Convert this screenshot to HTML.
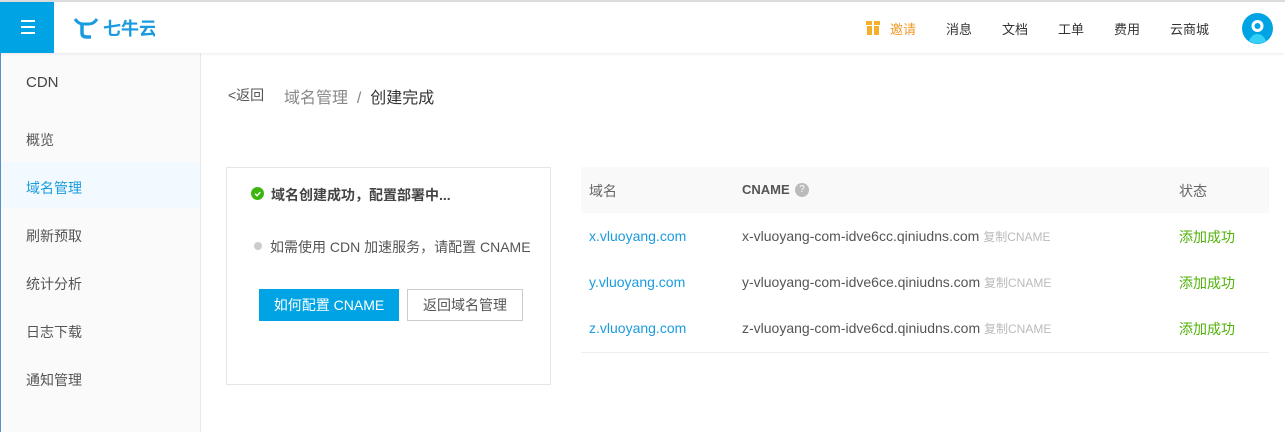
<!DOCTYPE html>
<html><head><meta charset="utf-8"><style>
*{margin:0;padding:0;box-sizing:border-box}
body{width:1285px;height:432px;overflow:hidden;background:#fff;font-family:"Liberation Sans","Noto Sans CJK SC",sans-serif;color:#333;position:relative;font-size:13px}
.abs{position:absolute;white-space:nowrap}
#top{position:absolute;left:0;top:0;width:1285px;height:2px;background:#ddd}
#hdr{position:absolute;left:0;top:2px;width:1285px;height:51px;background:#fff;box-shadow:0 1px 3px rgba(0,0,0,.08);z-index:2}
#menu{position:absolute;left:0;top:2px;width:54px;height:51px;background:#00a4e4;z-index:3}
#menu i{position:absolute;left:21px;width:14px;height:2px;background:#fff}
#side{position:absolute;left:0;top:53px;width:201px;height:379px;background:#fafafa;border-right:1px solid #e8e8e8;border-left:1px solid #5b8fc7}
.nav{color:#555;font-size:14px}
.th{color:#666;font-size:13px}
.a{color:#1a9bdf;font-size:14px}
.c{color:#555;font-size:14px}
.c small{color:#bbb;font-size:12px}
.g{color:#52b20a;font-size:14px}
</style></head><body>
<div id="top"></div>
<div id="hdr">
<svg class="abs" style="left:73px;top:14px" width="82" height="24" viewBox="0 0 82 24"><path d="M2 3c2 3 5 5 8 5h6c3 0 6-2 8-5" stroke="#1a9bdf" stroke-width="3" fill="none"/><path d="M9 8v9c0 3 2 4 5 4h4" stroke="#1a9bdf" stroke-width="3.5" fill="none"/><text x="30" y="19" font-size="18" fill="#1a9bdf" font-family="Noto Sans CJK SC" font-weight="bold">七牛云</text></svg>
<svg class="abs" style="left:866px;top:19px" width="14" height="14"><rect x="0" y="0" width="14" height="4" fill="#f5b02a"/><rect x="1" y="5" width="12" height="9" fill="#f5b02a"/><rect x="6" y="0" width="2" height="14" fill="#fff"/></svg>
<div class="abs" style="left:890px;top:17px;color:#f39a2b;font-size:13px">邀请</div>
<div class="abs" style="left:946px;top:17px;font-size:13px">消息</div>
<div class="abs" style="left:1002px;top:17px;font-size:13px">文档</div>
<div class="abs" style="left:1058px;top:17px;font-size:13px">工单</div>
<div class="abs" style="left:1114px;top:17px;font-size:13px">费用</div>
<div class="abs" style="left:1170px;top:17px;font-size:13px">云商城</div>
<svg class="abs" style="left:1242px;top:11px" width="31" height="31" viewBox="0 0 31 31"><circle cx="15.5" cy="15.5" r="15.5" fill="#00a4e4"/><path d="M7 28c2-5 5-7 8.5-7s6.5 2 8.5 7a15.5 15.5 0 0 1-17 0z" fill="#34d0f5"/><circle cx="15.5" cy="13" r="6" fill="#fff"/><circle cx="15.5" cy="13" r="3" fill="#00a4e4"/></svg>
</div>
<div id="menu"><i style="top:18px"></i><i style="top:24px"></i><i style="top:30px"></i></div>
<div id="side">
<div class="abs" style="left:25px;top:21px;font-size:15px;color:#444">CDN</div>
<div class="abs nav" style="left:25px;top:77px">概览</div>
<div class="abs" style="left:0;top:109px;width:199px;height:46px;background:#f3faff"></div>
<div class="abs nav" style="left:25px;top:125px;color:#1a9bdf">域名管理</div>
<div class="abs nav" style="left:25px;top:173px">刷新预取</div>
<div class="abs nav" style="left:25px;top:221px">统计分析</div>
<div class="abs nav" style="left:25px;top:269px">日志下载</div>
<div class="abs nav" style="left:25px;top:317px">通知管理</div>
</div>
<div class="abs" style="left:228px;top:85px;font-size:14px;color:#555">&lt;返回</div>
<div class="abs" style="left:284px;top:84px;font-size:16px;color:#888">域名管理 &nbsp;/&nbsp; <span style="color:#333">创建完成</span></div>
<div class="abs" style="left:226px;top:167px;width:325px;height:218px;border:1px solid #e5e5e5"></div>
<svg class="abs" style="left:251px;top:187px" width="13" height="13"><circle cx="6.5" cy="6.5" r="6.5" fill="#3cb60f"/><path d="M4 6.7l2 2 3.3-3.5" stroke="#fff" stroke-width="1.4" fill="none"/></svg>
<div class="abs" style="left:271px;top:185px;font-size:14px;font-weight:bold;color:#444">域名创建成功，配置部署中...</div>
<div class="abs" style="left:254px;top:242px;width:8px;height:8px;border-radius:50%;background:#ccc"></div>
<div class="abs" style="left:270px;top:237px;font-size:14px;color:#555">如需使用 CDN 加速服务，请配置 CNAME</div>
<div class="abs" style="left:259px;top:289px;width:140px;height:32px;background:#00a4e4;color:#fff;font-size:14px;text-align:center;line-height:32px">如何配置 CNAME</div>
<div class="abs" style="left:407px;top:289px;width:116px;height:32px;border:1px solid #ccc;color:#555;font-size:14px;text-align:center;line-height:30px">返回域名管理</div>
<div class="abs" style="left:581px;top:167px;width:688px;height:46px;background:#f9f9f9"></div>
<div class="abs th" style="left:589px;top:181px;font-size:14px">域名</div>
<div class="abs th" style="left:742px;top:182px;font-weight:bold;color:#555">CNAME</div>
<div class="abs" style="left:795px;top:183px;width:14px;height:14px;border-radius:50%;background:#bbb;color:#fff;font-size:10px;text-align:center;line-height:14px">?</div>
<div class="abs th" style="left:1179px;top:181px;font-size:14px">状态</div>
<div class="abs a" style="left:589px;top:228px">x.vluoyang.com</div>
<div class="abs c" style="left:742px;top:228px">x-vluoyang-com-idve6cc.qiniudns.com <small>复制CNAME</small></div>
<div class="abs g" style="left:1179px;top:227px">添加成功</div>
<div class="abs a" style="left:589px;top:274px">y.vluoyang.com</div>
<div class="abs c" style="left:742px;top:274px">y-vluoyang-com-idve6ce.qiniudns.com <small>复制CNAME</small></div>
<div class="abs g" style="left:1179px;top:273px">添加成功</div>
<div class="abs a" style="left:589px;top:320px">z.vluoyang.com</div>
<div class="abs c" style="left:742px;top:320px">z-vluoyang-com-idve6cd.qiniudns.com <small>复制CNAME</small></div>
<div class="abs g" style="left:1179px;top:319px">添加成功</div>
<div class="abs" style="left:581px;top:352px;width:688px;height:1px;background:#eee"></div>
</body></html>
